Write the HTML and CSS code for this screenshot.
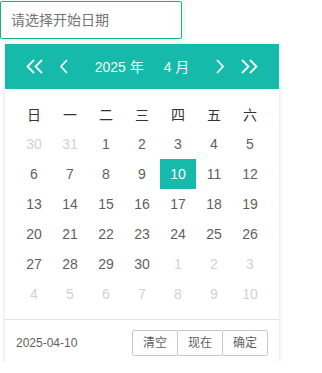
FILE: index.html
```html
<!DOCTYPE html>
<html lang="zh-CN">
<head>
    <meta charset="UTF-8">
    <meta name="viewport" content="width=device-width, initial-scale=1.0">
    <title>日期选择</title>
    <link rel="stylesheet" href="styles.css">
</head>
<body>
    <div class="page">
        <input type="text" class="date-input" placeholder="请选择开始日期">

        <div class="laydate">
            <div class="laydate-header">
                <div class="nav-group">
                    <svg class="icon-double" width="17" height="15" viewBox="0 0 17 15">
                        <path d="M8 1 L1.5 7.5 L8 14 M16 1 L9.5 7.5 L16 14" />
                    </svg>
                    <svg class="icon-single" width="8" height="15" viewBox="0 0 8 15">
                        <path d="M7 1 L1 7.5 L7 14" />
                    </svg>
                </div>
                <div class="set-ym">
                    <span>2025 年</span>
                    <span>4 月</span>
                </div>
                <div class="nav-group">
                    <svg class="icon-single" width="8" height="15" viewBox="0 0 8 15">
                        <path d="M1 1 L7 7.5 L1 14" />
                    </svg>
                    <svg class="icon-double" width="17" height="15" viewBox="0 0 17 15">
                        <path d="M1 1 L7.5 7.5 L1 14 M9 1 L15.5 7.5 L9 14" />
                    </svg>
                </div>
            </div>

            <div class="laydate-content">
                <table>
                    <thead>
                        <tr><th>日</th><th>一</th><th>二</th><th>三</th><th>四</th><th>五</th><th>六</th></tr>
                    </thead>
                    <tbody>
                        <tr><td class="other">30</td><td class="other">31</td><td>1</td><td>2</td><td>3</td><td>4</td><td>5</td></tr>
                        <tr><td>6</td><td>7</td><td>8</td><td>9</td><td class="this">10</td><td>11</td><td>12</td></tr>
                        <tr><td>13</td><td>14</td><td>15</td><td>16</td><td>17</td><td>18</td><td>19</td></tr>
                        <tr><td>20</td><td>21</td><td>22</td><td>23</td><td>24</td><td>25</td><td>26</td></tr>
                        <tr><td>27</td><td>28</td><td>29</td><td>30</td><td class="other">1</td><td class="other">2</td><td class="other">3</td></tr>
                        <tr><td class="other">4</td><td class="other">5</td><td class="other">6</td><td class="other">7</td><td class="other">8</td><td class="other">9</td><td class="other">10</td></tr>
                    </tbody>
                </table>
            </div>

            <div class="laydate-footer">
                <span class="footer-date">2025-04-10</span>
                <div class="footer-btns">
                    <span>清空</span><span>现在</span><span>确定</span>
                </div>
            </div>
        </div>
    </div>
</body>
</html>
```

FILE: styles.css
```css
body {
    margin: 0;
    font-family: "Liberation Sans", Arial, "Noto Sans CJK SC", sans-serif;
    background-color: #fff;
}
.page {
    padding-top: 1px;
}
.date-input {
    display: block;
    box-sizing: border-box;
    width: 182px;
    height: 38px;
    margin: 0;
    padding: 0 10px;
    border: 1px solid #16b777;
    border-radius: 2px;
    box-shadow: 0 0 0 3px rgba(22, 183, 119, 0.08);
    font-family: inherit;
    font-size: 14px;
    color: #333;
    outline: none;
}
.date-input::placeholder {
    color: #757575;
}
.laydate {
    width: 274px;
    margin: 5px 0 0 5px;
    background-color: #fff;
    box-shadow: 0 1px 4px rgba(0, 0, 0, 0.16);
    color: #5f5f5f;
}
.laydate-header {
    display: flex;
    align-items: center;
    justify-content: space-between;
    height: 45px;
    padding: 0 21px;
    background-color: #16baaa;
    color: #f6f6f6;
    font-size: 14px;
}
.nav-group {
    display: flex;
    align-items: center;
    gap: 17px;
}
.nav-group svg {
    display: block;
}
.nav-group path {
    fill: none;
    stroke: #f6f6f6;
    stroke-width: 1.8;
}
.set-ym {
    display: flex;
    gap: 20px;
    line-height: 20px;
    padding-top: 1px;
}
.laydate-content {
    padding: 10px 11px;
}
.laydate-content table {
    border-collapse: collapse;
    border-spacing: 0;
}
.laydate-content th,
.laydate-content td {
    width: 36px;
    height: 30px;
    padding: 0;
    text-align: center;
    font-size: 14px;
}
.laydate-content th {
    font-weight: normal;
    color: #333;
}
.laydate-content td.other {
    color: #d2d2d2;
}
.laydate-content td.this {
    background-color: #16baaa;
    color: #fff;
}
.laydate-footer {
    display: flex;
    align-items: flex-start;
    justify-content: space-between;
    height: 32px;
    padding: 10px 11px 0 11px;
    border-top: 1px solid #e2e2e2;
    font-size: 12px;
}
.footer-date {
    line-height: 26px;
    margin-left: 0;
    color: #5f5f5f;
}
.footer-btns {
    display: flex;
}
.footer-btns span {
    height: 24px;
    line-height: 24px;
    padding: 0 10px;
    margin-left: -1px;
    border: 1px solid #c9c9c9;
    border-radius: 2px;
    background-color: #fff;
    color: #5f5f5f;
}
```
